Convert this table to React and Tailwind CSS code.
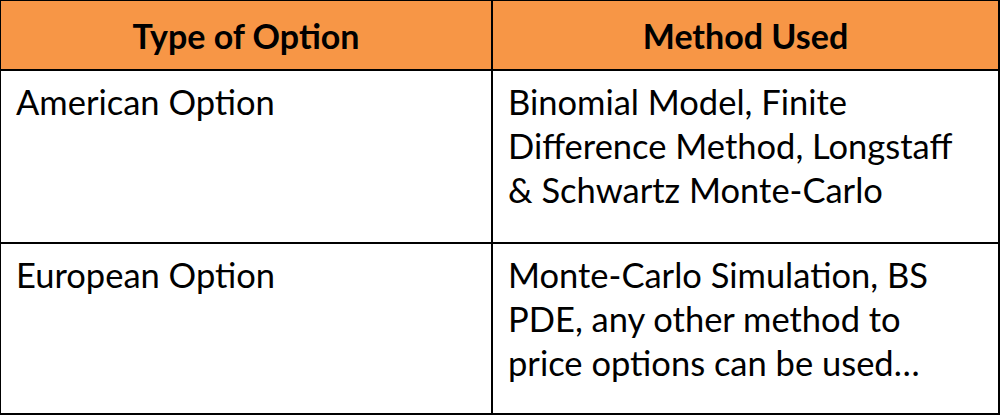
import React from "react";

const rows = [
  {
    type: "American Option",
    method: ["Binomial Model, Finite", "Difference Method, Longstaff", "& Schwartz Monte-Carlo"],
  },
  {
    type: "European Option",
    method: ["Monte-Carlo Simulation, BS", "PDE, any other method to", "price options can be used…"],
  },
];

function App() {
  return (
    <div className="w-[1000px] h-[416px] bg-white" style={{ fontFamily: "Lato, 'Open Sans', sans-serif" }}>
      <div className="w-[1000px] h-[415px] border-l border-t border-r-2 border-b-2 border-black grid grid-cols-[492px_1fr] grid-rows-[70px_173px_169px] text-black">
        <div className="bg-[#f79646] border-r-2 border-b-2 border-black flex items-center justify-center text-[34px] font-bold">
          Type of Option
        </div>
        <div className="bg-[#f79646] border-b-2 border-black flex items-center justify-center text-[34px] font-bold">
          Method Used
        </div>
        {rows.map((r, i) => (
          <React.Fragment key={r.type}>
            <div
              className={
                "border-r-2 border-black px-[15px] pt-[9px] text-[34.5px] leading-[44px] " +
                (i === 0 ? "border-b-2" : "")
              }
            >
              {r.type}
            </div>
            <div
              className={
                "border-black px-[15px] pt-[9px] text-[34.5px] leading-[44px] " +
                (i === 0 ? "border-b-2" : "")
              }
            >
              {r.method.map((line) => (
                <div key={line}>{line}</div>
              ))}
            </div>
          </React.Fragment>
        ))}
      </div>
    </div>
  );
}

export default App;
